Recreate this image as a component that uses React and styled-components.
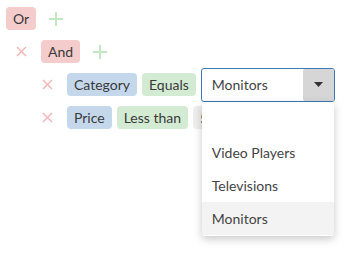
import React from "react";
import styled, { createGlobalStyle } from "styled-components";

const GlobalStyle = createGlobalStyle`
  html, body {
    margin: 0;
    min-height: 100%;
  }
  body {
    min-height: 256px;
    background: #ffffff;
    font-family: Lato, "Liberation Sans", sans-serif;
    color: #333333;
  }
  #root {
    min-height: 256px;
  }
`;

const tones = {
  pink: "#f4cccc",
  blue: "#c5d8eb",
  green: "#d3ebd3",
  gray: "#eeeeee",
};

const Tree = styled.div`
  display: flex;
  flex-direction: column;
  gap: 10px;
  min-height: 256px;
  box-sizing: border-box;
  padding: 7px 0 0 6px;
`;

const Row = styled.div`
  display: flex;
  align-items: center;
  gap: 5px;
  height: 23px;
  padding-left: ${(p) => p.$level * 26}px;
`;

const Chip = styled.span`
  display: inline-flex;
  align-items: center;
  height: 23px;
  padding: 0 7px;
  border-radius: 4px;
  font-size: 14px;
  background: ${(p) => tones[p.$tone]};
  color: #3a3a3a;
  white-space: nowrap;
`;

const IconButton = styled.button`
  display: flex;
  align-items: center;
  justify-content: center;
  width: 30px;
  height: 23px;
  padding: 0;
  border: none;
  background: none;
  cursor: pointer;
`;

const SelectWrap = styled.div`
  position: relative;
  z-index: 5;
`;

const Select = styled.div`
  display: flex;
  align-items: center;
  justify-content: space-between;
  box-sizing: border-box;
  width: 134px;
  height: 34px;
  border: 1px solid #3b78b8;
  border-radius: 3px;
  padding-left: 10px;
  font-size: 14px;
  color: #444444;
  background: #ffffff;
`;

const Caret = styled.span`
  display: flex;
  align-items: center;
  justify-content: center;
  width: 31px;
  height: 32px;
  background: #d6d6d6;
  border-radius: 2px;
`;

const Menu = styled.ul`
  position: absolute;
  top: 34px;
  left: 1px;
  width: 132px;
  margin: 0;
  padding: 1px 0;
  list-style: none;
  background: #ffffff;
  border-radius: 3px;
  box-shadow: 0 3px 9px rgba(0, 0, 0, 0.22);
  z-index: 10;
`;

const Option = styled.li`
  height: 33px;
  line-height: 33px;
  padding-left: 10px;
  font-size: 14px;
  color: #444444;
  background: ${(p) => (p.$active ? "#f3f3f3" : "transparent")};
`;

const Plus = () => (
  <svg width="16" height="16" viewBox="0 0 16 16">
    <path d="M8 1v14M1 8h14" stroke="#c3e6c3" strokeWidth="2" />
  </svg>
);

const Cross = () => (
  <svg width="11" height="11" viewBox="0 0 11 11">
    <path d="M1 1l9 9M10 1l-9 9" stroke="#f4b8b8" strokeWidth="1.5" />
  </svg>
);

const App = () => {
  const options = ["", "Video Players", "Televisions", "Monitors"];
  return (
    <>
      <GlobalStyle />
      <Tree>
        <Row $level={0}>
          <Chip $tone="pink">Or</Chip>
          <IconButton>
            <Plus />
          </IconButton>
        </Row>
        <Row $level={0}>
          <IconButton>
            <Cross />
          </IconButton>
          <Chip $tone="pink">And</Chip>
          <IconButton>
            <Plus />
          </IconButton>
        </Row>
        <Row $level={1}>
          <IconButton>
            <Cross />
          </IconButton>
          <Chip $tone="blue">Category</Chip>
          <Chip $tone="green">Equals</Chip>
          <SelectWrap>
            <Select>
              Monitors
              <Caret>
                <svg width="9" height="5" viewBox="0 0 9 5">
                  <path d="M0 0h9L4.5 5z" fill="#333333" />
                </svg>
              </Caret>
            </Select>
            <Menu>
              {options.map((o, i) => (
                <Option key={i} $active={o === "Monitors"}>
                  {o}
                </Option>
              ))}
            </Menu>
          </SelectWrap>
        </Row>
        <Row $level={1}>
          <IconButton>
            <Cross />
          </IconButton>
          <Chip $tone="blue">Price</Chip>
          <Chip $tone="green">Less than</Chip>
          <Chip $tone="gray">500</Chip>
        </Row>
      </Tree>
    </>
  );
};

export default App;
